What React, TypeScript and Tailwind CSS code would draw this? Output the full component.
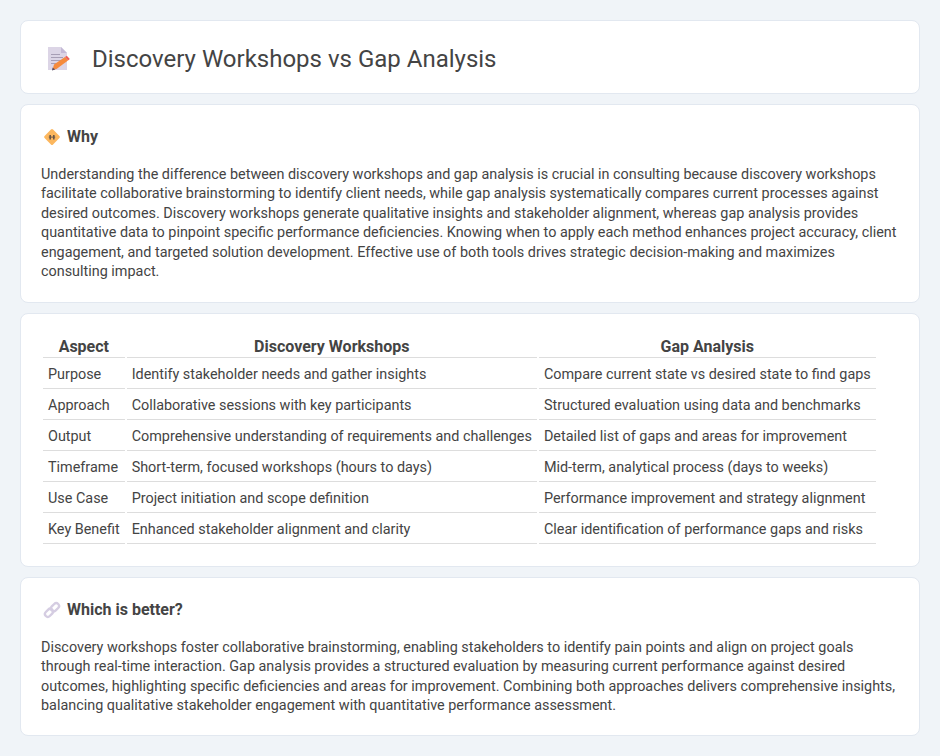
const rows = [
  ["Purpose", "Identify stakeholder needs and gather insights", "Compare current state vs desired state to find gaps"],
  ["Approach", "Collaborative sessions with key participants", "Structured evaluation using data and benchmarks"],
  ["Output", "Comprehensive understanding of requirements and challenges", "Detailed list of gaps and areas for improvement"],
  ["Timeframe", "Short-term, focused workshops (hours to days)", "Mid-term, analytical process (days to weeks)"],
  ["Use Case", "Project initiation and scope definition", "Performance improvement and strategy alignment"],
  ["Key Benefit", "Enhanced stakeholder alignment and clarity", "Clear identification of performance gaps and risks"],
];

function DocIcon() {
  return (
    <svg width="24" height="24" viewBox="0 0 24 24" className="shrink-0">
      <path d="M2 0h13l6 6v17H2z" fill="#dcd5e6" />
      <path d="M15 0l6 6h-6z" fill="#c4b9d6" />
      <path d="M5 7.5h9M5 10.5h12M5 13.5h10M5 16.5h5" stroke="#a79eb5" strokeWidth="1" />
      <path d="M8 17.5L19 10l3 3.5L10.5 22 6.5 23z" fill="#f58a3c" />
      <path d="M19 10l1.8-1.3 3 3.4L22 13.5z" fill="#ee5f57" />
      <path d="M6 23.5l.6-3 2.6 2z" fill="#5a4f63" />
    </svg>
  );
}

function SignIcon() {
  return (
    <svg width="18" height="18" viewBox="0 0 18 18" className="shrink-0">
      <rect x="3" y="3" width="12" height="12" rx="1.5" transform="rotate(45 9 9)" fill="#fcb75e" />
      <path d="M5.8 8.6h6.4v1h-6.4z" fill="#6a5647" />
      <path d="M7.2 7v4.5M10.8 7v4.5" stroke="#6a5647" strokeWidth="1.6" />
    </svg>
  );
}

function LinkIcon() {
  return (
    <svg width="18" height="18" viewBox="0 0 18 18" className="shrink-0" fill="none">
      <g stroke="#d5cde2" strokeWidth="2.4">
        <rect x="1.5" y="9" width="9" height="5.6" rx="2.8" transform="rotate(-45 6 11.8)" />
        <rect x="7.5" y="3.4" width="9" height="5.6" rx="2.8" transform="rotate(-45 12 6.2)" />
      </g>
    </svg>
  );
}

function Card({ className = "", children }: { className?: string; children: React.ReactNode }) {
  return <section className={`rounded-lg border border-[#e2e8f0] bg-white ${className}`}>{children}</section>;
}

export default function App() {
  return (
    <div className="flex min-h-[756px] flex-col gap-[10px] bg-[#f0f4f8] p-5 font-['Roboto',sans-serif] text-[14.4px] leading-[19.44px] text-[#444]">
      <Card className="flex h-[74px] items-center gap-[22px] pl-[25px] pt-[4px]">
        <DocIcon />
        <h1 className="text-[24px] leading-[29px] font-normal">Discovery Workshops vs Gap Analysis</h1>
      </Card>

      <Card className="h-[199px] px-5 pt-[20px]">
        <h2 className="flex h-[24px] items-center gap-[6px] pl-[2px] text-[16px] font-bold">
          <SignIcon />
          Why
        </h2>
        <p className="mt-[16px]">
          Understanding the difference between discovery workshops and gap analysis is crucial in consulting because discovery workshops facilitate collaborative brainstorming to identify client needs, while gap analysis systematically compares current processes against desired outcomes. Discovery workshops generate qualitative insights and stakeholder alignment, whereas gap analysis provides quantitative data to pinpoint specific performance deficiencies. Knowing when to apply each method enhances project accuracy, client engagement, and targeted solution development. Effective use of both tools drives strategic decision-making and maximizes consulting impact.
        </p>
      </Card>

      <Card className="h-[254px] px-5 pt-[20px]">
        <table className="border-separate border-spacing-[2px]">
          <thead>
            <tr>
              {["Aspect", "Discovery Workshops", "Gap Analysis"].map((h) => (
                <th key={h} className="border-b border-[#ddd] px-[5px] pb-[1px] pt-[1px] text-center text-[16px] leading-[19px] font-bold">
                  {h}
                </th>
              ))}
            </tr>
          </thead>
          <tbody>
            {rows.map((r) => (
              <tr key={r[0]}>
                {r.map((c) => (
                  <td key={c} className="border-b border-[#ddd] px-[5px] pt-[6px] pb-[4px] text-left leading-[18px]">
                    {c}
                  </td>
                ))}
              </tr>
            ))}
          </tbody>
        </table>
      </Card>

      <Card className="h-[159px] px-5 pt-[20px]">
        <h2 className="flex h-[24px] items-center gap-[6px] pl-[2px] text-[16px] font-bold">
          <LinkIcon />
          Which is better?
        </h2>
        <p className="mt-[16px]">
          Discovery workshops foster collaborative brainstorming, enabling stakeholders to identify pain points and align on project goals through real-time interaction. Gap analysis provides a structured evaluation by measuring current performance against desired outcomes, highlighting specific deficiencies and areas for improvement. Combining both approaches delivers comprehensive insights, balancing qualitative stakeholder engagement with quantitative performance assessment.
        </p>
      </Card>
    </div>
  );
}
